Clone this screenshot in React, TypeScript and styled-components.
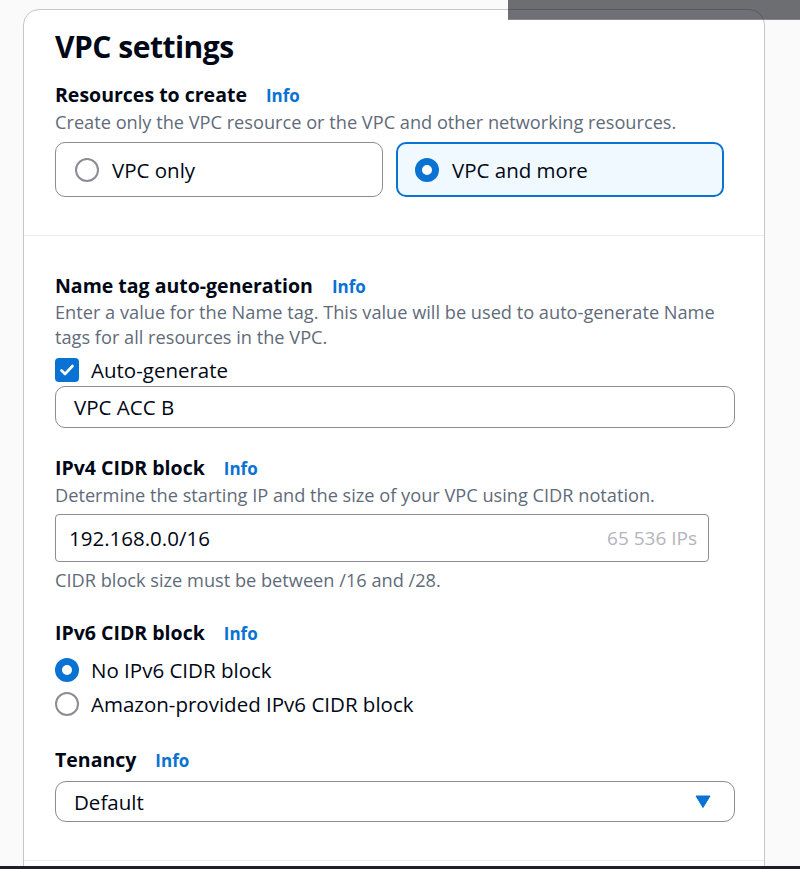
import React from "react";
import styled, { createGlobalStyle } from "styled-components";

const GlobalStyle = createGlobalStyle`
  html, body {
    margin: 0;
    padding: 0;
    background: #fafafa;
  }
  body {
    font-family: "Open Sans", "Noto Sans", sans-serif;
    color: #000716;
    overflow: hidden;
  }
`;

const Page = styled.div`
  position: relative;
  height: 869px;
  display: flex;
  flex-direction: column;
  overflow: hidden;
`;

const Main = styled.div`
  flex: 1;
  overflow: hidden;
  padding: 9px 0 0 23px;
`;

const Card = styled.div`
  width: 742px;
  box-sizing: border-box;
  background: #fff;
  border: 1px solid #c6c6cd;
  border-radius: 16px;
`;

const Section = styled.div<{ $divider?: boolean }>`
  display: flex;
  flex-direction: column;
  padding: 0 29px 0 31px;
  border-top: ${({ $divider }) => ($divider ? "1px solid #e9ebed" : "none")};
`;

const Title = styled.h2`
  margin: 19px 0 0;
  font-size: 30px;
  line-height: 36px;
  font-weight: 700;
  letter-spacing: -0.5px;
`;

const LabelRow = styled.div<{ $top: number }>`
  display: flex;
  align-items: baseline;
  gap: 19px;
  margin-top: ${({ $top }) => $top}px;
  height: 28px;
`;

const Label = styled.span`
  font-size: 19.5px;
  line-height: 28px;
  font-weight: 700;
`;

const InfoLink = styled.a`
  font-size: 17px;
  font-weight: 700;
  color: #0972d3;
  text-decoration: none;
`;

const Description = styled.p<{ $top?: number }>`
  margin: ${({ $top }) => $top ?? 1}px 0 0;
  font-size: 18.2px;
  line-height: 25px;
  color: #5f6b7a;
`;

const Tiles = styled.div`
  display: grid;
  grid-template-columns: 1fr 1fr;
  gap: 13px;
  width: 669px;
  margin-top: 7px;
`;

const Tile = styled.div<{ $selected?: boolean }>`
  display: flex;
  align-items: center;
  gap: 13px;
  height: 55px;
  box-sizing: border-box;
  padding-left: ${({ $selected }) => ($selected ? "17px" : "19px")};
  border: ${({ $selected }) => ($selected ? "2px solid #0972d3" : "1px solid #8c8c94")};
  border-radius: 10px;
  background: ${({ $selected }) => ($selected ? "#f0f9ff" : "#fff")};
`;

const Radio = styled.span<{ $checked?: boolean }>`
  flex: none;
  width: 24px;
  height: 24px;
  box-sizing: border-box;
  border-radius: 50%;
  background: #fff;
  border: ${({ $checked }) => ($checked ? "7.5px solid #0972d3" : "2px solid #8c8c94")};
`;

const OptionText = styled.span`
  font-size: 20.5px;
  line-height: 24px;
`;

const OptionRow = styled.div<{ $top: number }>`
  display: flex;
  align-items: center;
  gap: 12px;
  height: 24px;
  margin-top: ${({ $top }) => $top}px;
`;

const Checkbox = styled.span`
  flex: none;
  width: 24px;
  height: 24px;
  border-radius: 4px;
  background: #0972d3;
  display: flex;
  align-items: center;
  justify-content: center;
`;

const Field = styled.div<{ $top: number; $height: number; $radius: number; $width?: number; $pad: number }>`
  display: flex;
  align-items: center;
  box-sizing: border-box;
  margin-top: ${({ $top }) => $top}px;
  height: ${({ $height }) => $height}px;
  width: ${({ $width }) => ($width ? `${$width}px` : "100%")};
  padding: 0 11px 0 ${({ $pad }) => $pad}px;
  border: 1px solid #8c8c94;
  border-radius: ${({ $radius }) => $radius}px;
  background: #fff;
  font-size: 20.5px;
`;

const FieldValue = styled.span`
  flex: 1;
  color: #000716;
`;

const FieldHint = styled.span`
  color: #b4b4bb;
  font-size: 19px;
`;

const Caret = styled.svg`
  flex: none;
  margin-right: 12px;
`;

const Spacer = styled.div<{ $h: number }>`
  height: ${({ $h }) => $h}px;
`;

const Shade = styled.div`
  position: absolute;
  top: 0;
  left: 508px;
  width: 292px;
  height: 20px;
  background: rgba(22, 25, 31, 0.62);
  border-bottom: 1px solid rgba(150, 152, 156, 0.6);
  box-sizing: border-box;
`;

const BottomBar = styled.div`
  flex: none;
  height: 3px;
  background: #1c1f24;
`;

const Info = () => <InfoLink href="#">Info</InfoLink>;

export default function App() {
  return (
    <Page>
      <GlobalStyle />
      <Main>
        <Card>
          <Section>
            <Title>VPC settings</Title>
            <LabelRow $top={16}>
              <Label>Resources to create</Label>
              <Info />
            </LabelRow>
            <Description>Create only the VPC resource or the VPC and other networking resources.</Description>
            <Tiles>
              <Tile>
                <Radio />
                <OptionText>VPC only</OptionText>
              </Tile>
              <Tile $selected>
                <Radio $checked />
                <OptionText>VPC and more</OptionText>
              </Tile>
            </Tiles>
            <Spacer $h={38} />
          </Section>

          <Section $divider>
            <LabelRow $top={36}>
              <Label>Name tag auto-generation</Label>
              <Info />
            </LabelRow>
            <Description $top={0}>
              Enter a value for the Name tag. This value will be used to auto-generate Name tags for all resources in
              the VPC.
            </Description>
            <OptionRow $top={8}>
              <Checkbox>
                <svg width="16" height="16" viewBox="0 0 16 16">
                  <path d="M2.5 8.5l3.5 3.5 7.5-8" fill="none" stroke="#fff" strokeWidth="2.6" strokeLinecap="round" strokeLinejoin="round" />
                </svg>
              </Checkbox>
              <OptionText>Auto-generate</OptionText>
            </OptionRow>
            <Field $top={4} $height={42} $radius={10} $pad={18}>
              <FieldValue>VPC ACC B</FieldValue>
            </Field>

            <LabelRow $top={26}>
              <Label>IPv4 CIDR block</Label>
              <Info />
            </LabelRow>
            <Description>Determine the starting IP and the size of your VPC using CIDR notation.</Description>
            <Field $top={6} $height={48} $radius={4} $width={654} $pad={13}>
              <FieldValue>192.168.0.0/16</FieldValue>
              <FieldHint>65 536 IPs</FieldHint>
            </Field>
            <Description $top={6}>CIDR block size must be between /16 and /28.</Description>

            <LabelRow $top={26}>
              <Label>IPv6 CIDR block</Label>
              <Info />
            </LabelRow>
            <OptionRow $top={11}>
              <Radio $checked />
              <OptionText>No IPv6 CIDR block</OptionText>
            </OptionRow>
            <OptionRow $top={10}>
              <Radio />
              <OptionText>Amazon-provided IPv6 CIDR block</OptionText>
            </OptionRow>

            <LabelRow $top={30}>
              <Label>Tenancy</Label>
              <Info />
            </LabelRow>
            <Field $top={7} $height={41} $radius={11} $pad={18}>
              <FieldValue>Default</FieldValue>
              <Caret width="16" height="13" viewBox="0 0 16 13">
                <path d="M1 1h14L8 12.5z" fill="#0972d3" stroke="#0972d3" strokeWidth="1" strokeLinejoin="round" />
              </Caret>
            </Field>
            <Spacer $h={38} />
          </Section>

          <Section $divider>
            <Spacer $h={60} />
          </Section>
        </Card>
      </Main>
      <Shade />
      <BottomBar />
    </Page>
  );
}
